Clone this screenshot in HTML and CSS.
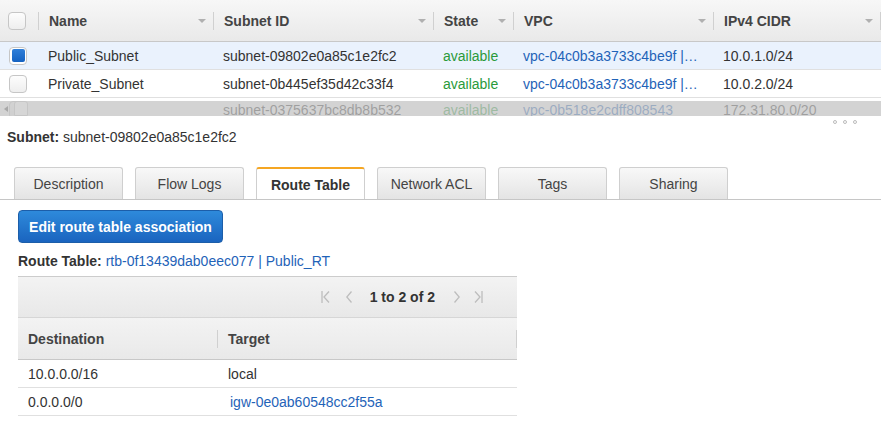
FILE: index.html
```html
<!DOCTYPE html>
<html>
<head>
<meta charset="utf-8">
<link rel="stylesheet" href="styles.css">
</head>
<body>
<div class="grid">
  <div class="ghead">
    <div class="hc hc-check"><span class="cb"></span><span class="div"></span></div>
    <div class="hc"><span class="lbl">Name</span><span class="sort"></span><span class="div"></span></div>
    <div class="hc"><span class="lbl">Subnet ID</span><span class="sort"></span><span class="div"></span></div>
    <div class="hc"><span class="lbl">State</span><span class="sort"></span><span class="div"></span></div>
    <div class="hc"><span class="lbl">VPC</span><span class="sort"></span><span class="div"></span></div>
    <div class="hc"><span class="lbl">IPv4 CIDR</span><span class="sort"></span><span class="div"></span></div>
  </div>
  <div class="grow sel">
    <div class="c c-check"><span class="cb on"><span class="tick"></span></span></div>
    <div class="c">Public_Subnet</div>
    <div class="c">subnet-09802e0a85c1e2fc2</div>
    <div class="c ok">available</div>
    <div class="c link">vpc-04c0b3a3733c4be9f |…</div>
    <div class="c">10.0.1.0/24</div>
  </div>
  <div class="grow">
    <div class="c c-check"><span class="cb"></span></div>
    <div class="c">Private_Subnet</div>
    <div class="c">subnet-0b445ef35d42c33f4</div>
    <div class="c ok">available</div>
    <div class="c link">vpc-04c0b3a3733c4be9f |…</div>
    <div class="c">10.0.2.0/24</div>
  </div>
  <div class="grow partial">
    <div class="c c-check"><span class="cb"></span></div>
    <div class="c"></div>
    <div class="c">subnet-0375637bc8db8b532</div>
    <div class="c ok">available</div>
    <div class="c link">vpc-0b518e2cdff808543</div>
    <div class="c">172.31.80.0/20</div>
  </div>
  <div class="hscroll"><span class="harrow"></span><span class="thumb"></span></div>
</div>

<div class="grip"><span class="dot"></span><span class="dot"></span><span class="dot"></span></div>

<div class="subnet-title"><b>Subnet:</b> subnet-09802e0a85c1e2fc2</div>

<div class="tabs">
  <div class="tab">Description</div>
  <div class="tab">Flow Logs</div>
  <div class="tab active">Route Table</div>
  <div class="tab">Network ACL</div>
  <div class="tab">Tags</div>
  <div class="tab">Sharing</div>
</div>

<div class="panel">
  <button class="btn">Edit route table association</button>
  <div class="rt-line"><b>Route Table:</b> <span class="link">rtb-0f13439dab0eec077 | Public_RT</span></div>

  <div class="rtable">
    <div class="pager">
      <svg class="pg first" width="9" height="14" viewBox="0 0 9 14"><path d="M1 1v12M8 1.5L3 7l5 5.5" fill="none" stroke="#bdbdbd" stroke-width="1.3"/></svg>
      <svg class="pg prev" width="6" height="14" viewBox="0 0 6 14"><path d="M5.5 1.5L0.8 7l4.7 5.5" fill="none" stroke="#bdbdbd" stroke-width="1.3"/></svg>
      <span class="pg-text">1 to 2 of 2</span>
      <svg class="pg next" width="6" height="14" viewBox="0 0 6 14"><path d="M0.5 1.5L5.2 7l-4.7 5.5" fill="none" stroke="#bdbdbd" stroke-width="1.3"/></svg>
      <svg class="pg last" width="9" height="14" viewBox="0 0 9 14"><path d="M8 1v12M1 1.5L6 7l-5 5.5" fill="none" stroke="#bdbdbd" stroke-width="1.3"/></svg>
    </div>
    <div class="rhead">
      <div class="rh"><span class="lbl">Destination</span><span class="div"></span></div>
      <div class="rh"><span class="lbl">Target</span><span class="div"></span></div>
    </div>
    <div class="rrow">
      <div class="rc">10.0.0.0/16</div>
      <div class="rc">local</div>
    </div>
    <div class="rrow">
      <div class="rc">0.0.0.0/0</div>
      <div class="rc link tgt">igw-0e0ab60548cc2f55a</div>
    </div>
  </div>
</div>
</body>
</html>
```

FILE: styles.css
```css
* { box-sizing: border-box; }
html, body { margin: 0; padding: 0; background: #fff; }
body {
  font-family: "Liberation Sans", Arial, sans-serif;
  font-size: 14px;
  color: #333;
  width: 881px;
  overflow: hidden;
}

.link { color: #1f63b8; }
.ok { color: #2a9a3b; }

/* ---------- top grid ---------- */
.grid {
  position: relative;
  height: 116px;
  overflow: hidden;
}
.ghead, .grow {
  display: grid;
  grid-template-columns: 39px 175px 220px 80px 200px 1fr;
}
.ghead {
  height: 42px;
  border-bottom: 1px solid #c8c8c8;
  background: linear-gradient(#f7f7f7, #e9e9e9);
}
.hc {
  display: flex;
  align-items: center;
  padding-left: 10px;
  font-weight: bold;
  color: #444;
  min-width: 0;
}
.hc-check { padding-left: 8px; justify-content: space-between; }
.hc .lbl { flex: 1; white-space: nowrap; }
.sort {
  width: 0; height: 0;
  border-left: 4px solid transparent;
  border-right: 4px solid transparent;
  border-top: 4px solid #b0b0b0;
  margin-right: 7px;
}
.div {
  width: 1px;
  height: 18px;
  background: #d0d0d0;
  flex: none;
}
.cb {
  width: 18px; height: 18px;
  border: 1px solid #c6c6c6;
  border-radius: 4px;
  background: linear-gradient(#fdfdfd, #eeeeee);
  display: flex;
  align-items: center;
  justify-content: center;
  flex: none;
}
.grow {
  height: 28px;
  border-bottom: 1px solid #e0e0e0;
}
.grow.sel { background: #eaf2fd; }
.grow.partial .c { padding-bottom: 3px; }
.c {
  display: flex;
  align-items: center;
  padding-left: 9px;
  white-space: nowrap;
  overflow: hidden;
  min-width: 0;
}
.c-check { padding-left: 9px; }
.cb.on { background: #fff; }
.tick {
  width: 13px; height: 13px;
  border-radius: 2px;
  background: linear-gradient(#2f7fd9, #1462c2);
}
.hscroll {
  position: absolute;
  left: 0; right: 0;
  top: 101px;
  height: 15px;
  background: rgba(196, 196, 196, 0.75);
  display: flex;
  align-items: center;
}
.harrow {
  width: 0; height: 0;
  border-top: 3px solid transparent;
  border-bottom: 3px solid transparent;
  border-right: 4px solid #a8a8a8;
  margin-left: 4px;
}
.thumb {
  width: 14px; height: 15px;
  margin-left: 6px;
  background: #d6d6d6;
  border: 1px solid #c6c6c6;
  border-radius: 3px 3px 0 0;
}

/* ---------- grip ---------- */
.grip {
  height: 12px;
  display: flex;
  justify-content: flex-end;
  align-items: center;
  gap: 6px;
  padding-right: 24px;
}
.dot {
  width: 4px; height: 4px;
  border: 1px solid #bbb;
  border-radius: 2px;
}

.subnet-title {
  line-height: 18px;
  padding-left: 7px;
  color: #333;
}
.subnet-title b { color: #333; }

/* ---------- tabs ---------- */
.tabs {
  margin-top: 21px;
  display: flex;
  gap: 12px;
  padding-left: 14px;
  border-bottom: 1px solid #c6c6c6;
}
.tab {
  width: 109px;
  height: 32px;
  display: flex;
  align-items: center;
  justify-content: center;
  border: 1px solid #cfcfcf;
  border-bottom: none;
  border-radius: 3px 3px 0 0;
  background: linear-gradient(#f8f8f8, #e4e4e4);
  color: #444;
}
.tab.active {
  background: #fff;
  border-top: 2px solid #f5a623;
  font-weight: bold;
  color: #333;
  padding-top: 1px;
}

/* ---------- panel ---------- */
.panel { padding-left: 18px; }
.btn {
  display: block;
  margin-top: 10px;
  width: 205px;
  height: 33px;
  border: 1px solid #1c5ea9;
  border-radius: 4px;
  background: linear-gradient(#2e8adb, #1a64bf);
  color: #fff;
  font-family: "Liberation Sans", Arial, sans-serif;
  font-size: 14px;
  font-weight: bold;
  padding: 0;
}
.rt-line {
  margin-top: 9px;
  line-height: 18px;
}
.rt-line b { color: #333; }

.rtable {
  margin-top: 6px;
  width: 499px;
}
.pager {
  height: 42px;
  border-top: 1px solid #cccccc;
  border-bottom: 1px solid #d6d6d6;
  background: linear-gradient(#f3f3f3, #e8e8e8);
  display: flex;
  align-items: center;
  justify-content: flex-end;
  padding-right: 34px;
}
.pg { display: block; }
.pg.prev { margin-left: 16px; }
.pg-text { margin-left: 18px; font-weight: bold; color: #333; }
.pg.next { margin-left: 19px; }
.pg.last { margin-left: 14px; }

.rhead {
  display: grid;
  grid-template-columns: 200px 1fr;
  height: 42px;
  border-bottom: 1px solid #c8c8c8;
  background: linear-gradient(#f3f3f3, #e9e9e9);
}
.rh {
  display: flex;
  align-items: center;
  font-weight: bold;
  color: #444;
  padding-left: 10px;
}
.rh .lbl { flex: 1; }
.rrow {
  display: grid;
  grid-template-columns: 200px 1fr;
  height: 28px;
  border-bottom: 1px solid #e0e0e0;
}
.rc {
  display: flex;
  align-items: center;
  padding-left: 10px;
  white-space: nowrap;
}
.rc.tgt { padding-left: 12px; }
```
